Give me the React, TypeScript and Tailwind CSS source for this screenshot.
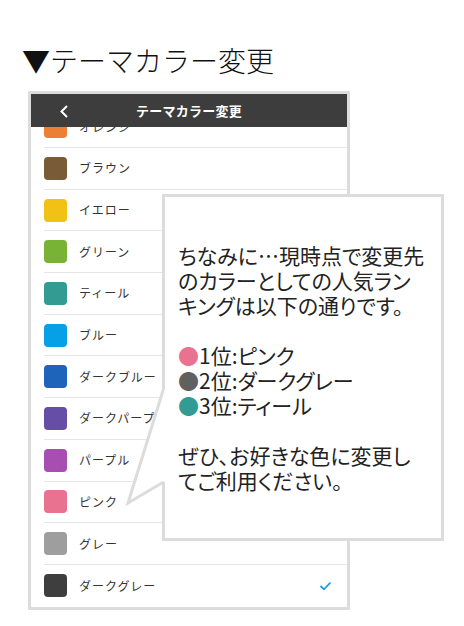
import React from 'react';

const jp = { fontFamily: '"Noto Sans CJK JP", "Noto Sans", sans-serif' };

const colors: { name: string; color: string }[] = [
  { name: 'オレンジ', color: '#ec7f33' },
  { name: 'ブラウン', color: '#7a5b38' },
  { name: 'イエロー', color: '#f1c116' },
  { name: 'グリーン', color: '#78b336' },
  { name: 'ティール', color: '#339b92' },
  { name: 'ブルー', color: '#05a0e8' },
  { name: 'ダークブルー', color: '#1d64ba' },
  { name: 'ダークパープル', color: '#664da6' },
  { name: 'パープル', color: '#a64fb0' },
  { name: 'ピンク', color: '#e97290' },
  { name: 'グレー', color: '#9e9e9e' },
  { name: 'ダークグレー', color: '#3e3e3e' },
];

const ColorRow = ({ name, color, last }: { name: string; color: string; last: boolean }) => (
  <div
    className={`ml-[13px] h-[41.7px] flex items-center shrink-0 ${
      last ? '' : 'border-b border-[#e6e6e6]'
    }`}
  >
    <div className="w-[23px] h-[23px] rounded-[4px]" style={{ backgroundColor: color }} />
    <span className="ml-[12px] text-[12px] tracking-[0.08em] text-[#333]">{name}</span>
    {last && (
      <svg className="ml-auto mr-[15px]" width="13" height="10" viewBox="0 0 13 10">
        <path d="M1.5 5 L5 8.3 L11.5 1.5" fill="none" stroke="#1a9be6" strokeWidth="1.8" />
      </svg>
    )}
  </div>
);

const Bubble = () => (
  <div className="absolute left-[162px] top-[194px] w-[282px] h-[347px]">
    <div className="w-full h-full bg-white border-[3px] border-[#dcdcdc] pl-[13px] pt-[46px] text-[21px] leading-[25px] text-[#222] [font-feature-settings:'palt'] whitespace-nowrap">
      <div>ちなみに…現時点で変更先</div>
      <div>のカラーとしての人気ラン</div>
      <div>キングは以下の通りです。</div>
      <div className="mt-[25px]">
        <span className="text-[#e97290]">●</span>1位:ピンク
      </div>
      <div>
        <span className="text-[#606060]">●</span>2位:ダークグレー
      </div>
      <div>
        <span className="text-[#339b92]">●</span>3位:ティール
      </div>
      <div className="mt-[25px]">ぜひ、お好きな色に変更し</div>
      <div>てご利用ください。</div>
    </div>
    <svg className="absolute left-[-40px] top-[190px]" width="48" height="125" viewBox="0 0 48 125">
      <polygon points="41.5,5 6,119 41.5,98 47,98 47,5" fill="#ffffff" />
      <polyline
        points="41.5,5 6,119 41.5,98"
        fill="none"
        stroke="#dcdcdc"
        strokeWidth="3"
        strokeLinejoin="miter"
      />
    </svg>
  </div>
);

export default function App() {
  return (
    <div className="relative w-[464px] h-[626px] bg-white overflow-hidden" style={jp}>
      <div className="pt-[46px] pl-[22px] text-[28px] leading-[28px] font-light text-[#111]">▼テーマカラー変更</div>

      <div className="ml-[28px] mt-[17px] w-[322px] h-[519px] border-[3px] border-[#dcdcdc] flex flex-col bg-white">
        <div className="h-[33px] bg-[#3d3d3d] flex items-center relative shrink-0">
          <svg className="absolute left-[28px] top-[11px]" width="10" height="13" viewBox="0 0 10 13">
            <path d="M8 1 L2.5 6.5 L8 12" fill="none" stroke="#ffffff" strokeWidth="2" />
          </svg>
          <div className="flex-1 text-center text-white text-[13px] font-bold tracking-[0.02em]">
            テーマカラー変更
          </div>
        </div>
        <div className="flex-1 overflow-hidden">
          <div className="-mt-[20.7px] flex flex-col">
            {colors.map((c, i) => (
              <ColorRow key={c.name} name={c.name} color={c.color} last={i === colors.length - 1} />
            ))}
          </div>
        </div>
      </div>

      <Bubble />
    </div>
  );
}
